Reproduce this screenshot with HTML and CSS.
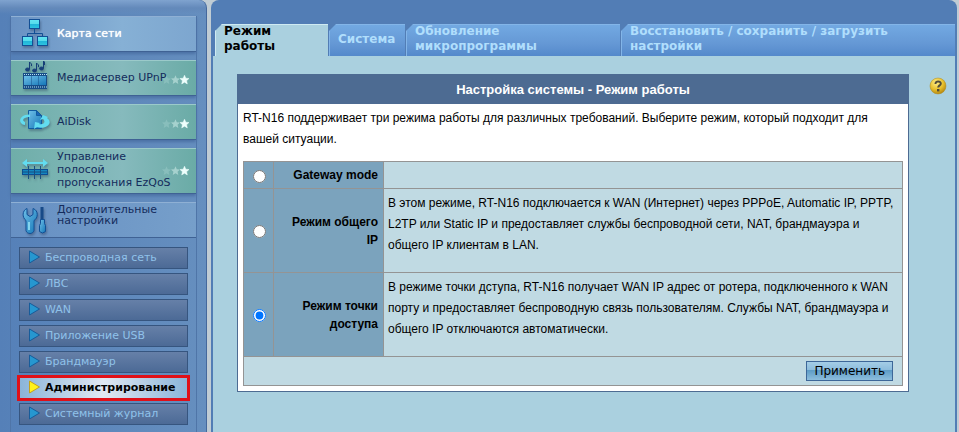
FILE: index.html
```html
<!DOCTYPE html>
<html lang="ru">
<head>
    <meta charset="UTF-8">
    <meta name="viewport" content="width=device-width, initial-scale=1.0">
    <title>RT-N16 - Режим работы</title>
    <link rel="stylesheet" href="styles.css">
</head>
<body>
    <!-- общие элементы для иконок -->
    <svg class="defs" width="0" height="0" aria-hidden="true">
        <defs>
            <linearGradient id="cyan" x1="0" y1="0" x2="0" y2="1">
                <stop offset="0" stop-color="#63e4f2"/>
                <stop offset="0.45" stop-color="#57dcec"/>
                <stop offset="0.5" stop-color="#1fb4d8"/>
                <stop offset="1" stop-color="#2fc4e0"/>
            </linearGradient>
            <linearGradient id="blue" x1="0" y1="0" x2="1" y2="1">
                <stop offset="0" stop-color="#6fc0e8"/>
                <stop offset="1" stop-color="#1577b8"/>
            </linearGradient>
            <radialGradient id="gold" cx="0.4" cy="0.3" r="0.7">
                <stop offset="0" stop-color="#ffee88"/>
                <stop offset="0.6" stop-color="#e8c02c"/>
                <stop offset="1" stop-color="#b88a10"/>
            </radialGradient>
            <path id="star" d="M4.500 0.200L5.800 3.200L9 3.500L6.600 5.700L7.300 8.900L4.500 7.200L1.700 8.900L2.400 5.700L0 3.500L3.200 3.200Z"/>
            <g id="stars">
                <use href="#star" x="0" fill="#d9f3f0" fill-opacity="0.2"/>
                <use href="#star" x="9" fill="#d9f3f0" fill-opacity="0.5"/>
                <use href="#star" x="18" fill="#effffd" stroke="#effffd" stroke-opacity="0.5"/>
            </g>
        </defs>
    </svg>

    <div class="page">
        <nav class="sidebar">
            <ul class="menu">
                <li>
                    <a class="menu-item home" href="#">
                        <svg class="icon" width="32" height="32" viewBox="0 0 32 32">
                            <path d="M16.500 12v5M9.500 20v-3.500h15v3.500" fill="none" stroke="#124f95"/>
                            <g fill="url(#cyan)" stroke="#124f95">
                                <rect x="11.500" y="2.500" width="10" height="9"/>
                                <rect x="4.500" y="19.500" width="10" height="9"/>
                                <rect x="19.500" y="19.500" width="10" height="9"/>
                            </g>
                        </svg>
                        <span>Карта сети</span>
                    </a>
                </li>
                <li>
                    <a class="menu-item green" href="#">
                        <svg class="icon" width="32" height="32" viewBox="0 0 32 32">
                            <g fill="#173f78" stroke="#173f78">
                                <path d="M11.500 1v7M11.500 1l2 2v2M18.500 2v7M18.500 2l2 2v2M25.500 0v7M25.500 0l1 1v3" fill="none" stroke-width="1"/>
                                <ellipse cx="9.500" cy="8.500" rx="2" ry="1.500"/>
                                <ellipse cx="16.500" cy="9.500" rx="2" ry="1.500"/>
                                <ellipse cx="23.500" cy="7.500" rx="2" ry="1.500"/>
                            </g>
                            <rect x="5" y="12" width="24" height="16" fill="#174d88"/>
                            <path d="M6 15h7v9H6zM13.500 15h7v9h-7zM21 15h7v9h-7z" fill="url(#blue)"/>
                            <path d="M6 13.500h23M6 26h23" stroke="#b6e0ee" stroke-width="1" stroke-dasharray="1 1"/>
                        </svg>
                        <span>Медиасервер UPnP</span>
                        <svg class="rating" width="28" height="10"><use href="#stars"/></svg>
                    </a>
                </li>
                <li>
                    <a class="menu-item green" href="#">
                        <svg class="icon" width="32" height="32" viewBox="0 0 32 32">
                            <path d="M10.500 5.500h8l5 5v13h-13z" fill="url(#blue)" stroke="#105ba0"/>
                            <path d="M18.500 5.500v5h5z" fill="#1667b8" stroke="#105ba0"/>
                            <path d="M12 9.500C5 9 0 14 3 18c1 1 2 2 4 2v-3C3 15 6 12 12 12zM25 10l5 2-1 1c7 5-1 12-10 9l-3 2 1-7 5 1-1 1c5 1 7-2 4-5l-3 1z" fill="#62dcf0"/>
                        </svg>
                        <span>AiDisk</span>
                        <svg class="rating" width="28" height="10"><use href="#stars"/></svg>
                    </a>
                </li>
                <li>
                    <a class="menu-item green tall" href="#">
                        <svg class="icon" width="32" height="32" viewBox="0 0 32 32">
                            <path d="M4 10l5-4v3h16V6l5 4-5 4v-3H9v3z" fill="#62dcf0"/>
                            <rect x="4.500" y="16.500" width="25" height="5" fill="#1487c0" stroke="#0c4d92"/>
                            <path d="M10.500 13v13M16.500 13v13M22.500 13v13M4 19h26" stroke="#174f82" fill="none"/>
                        </svg>
                        <span>Управление полосой пропускания EzQoS</span>
                        <svg class="rating" width="28" height="10"><use href="#stars"/></svg>
                    </a>
                </li>
                <li>
                    <a class="menu-item advanced" href="#">
                        <svg class="icon" width="32" height="32" viewBox="0 0 32 32">
                            <path d="M9 4.500v6l3 2 3-2v-6c6 2 5 10 1 12v10c-1 4-7 4-8 0v-10c-4-3-4-10 1-12z" fill="url(#blue)" stroke="#124f95"/>
                            <path d="M10 18h2v8h-2z" fill="#83d4ee"/>
                            <path d="M24 3v14" stroke="#174a88" stroke-width="3"/>
                            <path d="M22.500 15.500h4v4l1 2v6q-3 3-6 0v-6l1-2z" fill="url(#blue)" stroke="#124f95"/>
                        </svg>
                        <span>Дополнительные настройки</span>
                    </a>
                </li>
            </ul>
            <ul class="submenu">
                <li><a href="#"><svg class="arrow" width="13" height="14"><path d="M1.500 1L11.500 7L1.500 13Z"/></svg>Беспроводная сеть</a></li>
                <li><a href="#"><svg class="arrow" width="13" height="14"><path d="M1.500 1L11.500 7L1.500 13Z"/></svg>ЛВС</a></li>
                <li><a href="#"><svg class="arrow" width="13" height="14"><path d="M1.500 1L11.500 7L1.500 13Z"/></svg>WAN</a></li>
                <li><a href="#"><svg class="arrow" width="13" height="14"><path d="M1.500 1L11.500 7L1.500 13Z"/></svg>Приложение USB</a></li>
                <li><a href="#"><svg class="arrow" width="13" height="14"><path d="M1.500 1L11.500 7L1.500 13Z"/></svg>Брандмауэр</a></li>
                <li><a class="active" href="#"><svg class="arrow" width="13" height="14"><path d="M1.500 1L11.500 7L1.500 13Z"/></svg>Администрирование</a></li>
                <li><a href="#"><svg class="arrow" width="13" height="14"><path d="M1.500 1L11.500 7L1.500 13Z"/></svg>Системный журнал</a></li>
            </ul>
        </nav>

        <main class="main">
            <nav class="tabs">
                <a class="tab tab-mode current" href="#"><span>Режим работы</span></a>
                <a class="tab tab-system" href="#"><span>Система</span></a>
                <a class="tab tab-firmware" href="#"><span>Обновление микропрограммы</span></a>
                <a class="tab tab-settings" href="#"><span>Восстановить / сохранить / загрузить настройки</span></a>
            </nav>

            <div class="content">
                <form class="panel">
                    <h1>Настройка системы - Режим работы</h1>
                    <div class="panel-body">
                        <p>RT-N16 поддерживает три режима работы для различных требований. Выберите режим, который подходит для вашей ситуации.</p>
                        <table class="modes">
                            <tr>
                                <td class="pick"><input type="radio" name="mode" id="mode-gateway"></td>
                                <th><label for="mode-gateway">Gateway mode</label></th>
                                <td class="about"></td>
                            </tr>
                            <tr class="big">
                                <td class="pick"><input type="radio" name="mode" id="mode-router"></td>
                                <th><label for="mode-router">Режим общего IP</label></th>
                                <td class="about">В этом режиме, RT-N16 подключается к WAN (Интернет) через PPPoE, Automatic IP, PPTP, L2TP или Static IP и предоставляет службы беспроводной сети, NAT, брандмауэра и общего IP клиентам в LAN.</td>
                            </tr>
                            <tr class="big">
                                <td class="pick"><input type="radio" name="mode" id="mode-ap" checked></td>
                                <th><label for="mode-ap">Режим точки доступа</label></th>
                                <td class="about">В режиме точки дступа, RT-N16 получает WAN IP адрес от ротера, подключенного к WAN порту и предоставляет беспроводную связь пользователям. Службы NAT, брандмауэра и общего IP отключаются автоматически.</td>
                            </tr>
                            <tr>
                                <td class="actions" colspan="3"><button type="button">Применить</button></td>
                            </tr>
                        </table>
                    </div>
                </form>
                <a class="help" href="#" aria-label="Справка">
                    <svg width="18" height="18" viewBox="0 0 18 18">
                        <circle cx="9" cy="9" r="8" fill="url(#gold)" stroke="#ad8a24" stroke-width="0.500"/>
                        <path d="M6.500 7C6.300 3.500 12 3.700 11.800 6.700C11.700 8.300 9.200 8.500 9.200 10.500" fill="none" stroke="#514c38" stroke-width="2"/>
                        <rect x="8" y="12" width="2.400" height="2.400" fill="#514c38"/>
                    </svg>
                </a>
            </div>
        </main>
    </div>
</body>
</html>
```

FILE: styles.css
```css
* {
    box-sizing: border-box;
}

body {
    margin: 0;
    background: #c0ccd4;
    font-family: Arial, "Liberation Sans", sans-serif;
    font-size: 12px;
}

a {
    color: inherit;
    text-decoration: none;
}

ul {
    list-style: none;
    margin: 0;
    padding: 0;
}

.defs {
    position: absolute;
}

.page {
    display: flex;
    gap: 4px;
    min-height: 100vh;
}

/* Левое меню */
.sidebar {
    flex: none;
    display: flex;
    flex-direction: column;
    width: 207px;
    padding: 16px 9px 0 10px;
    background: linear-gradient(#7fa3cf, #6389ba 8px, transparent 14px), linear-gradient(90deg, #5580b8, #668fbf);
    border-right: 1px solid #45689c;
    border-radius: 0 8px 0 0;
    font-family: Verdana, "DejaVu Sans", sans-serif;
    font-size: 11px;
}

.menu {
    display: flex;
    flex-direction: column;
    gap: 8px;
    border: solid #4f75a8;
    border-width: 0 1px;
}

.menu-item {
    position: relative;
    display: flex;
    align-items: center;
    gap: 7px;
    min-height: 36px;
    padding: 0 24px 2px 7px;
    border-top: 1px solid #8fb0d4;
    border-bottom: 1px solid #3f6294;
    box-shadow: 0 2px 3px #4b70a4;
    color: #142c5c;
    line-height: 13px;
}

.menu-item .icon {
    flex: none;
    filter: drop-shadow(1px 2px 1px rgba(40, 60, 90, 0.4));
}

.home {
    background: linear-gradient(90deg, #6991c3, #86b0d5 60%, #7da6cf);
    color: white;
    text-shadow: 0 0 1px white;
}

.green {
    background: linear-gradient(90deg, #6faea9, #86babd 60%, #6aaba6);
    border-top-color: #9bcaca;
}

.green:not(.tall) {
    white-space: nowrap;
}

.tall {
    min-height: 46px;
    padding-bottom: 4px;
}

.advanced {
    background: linear-gradient(90deg, #6790c3, #769fca);
    box-shadow: none;
    line-height: 11px;
    padding-bottom: 10px;
}

.advanced .icon {
    margin-bottom: -10px;
}

.rating {
    position: absolute;
    right: 6px;
    top: 14px;
    overflow: visible;
}

.tall .rating {
    top: 17px;
}

.submenu {
    flex: 1;
    display: flex;
    flex-direction: column;
    gap: 4px;
    padding: 9px 8px 7px;
    border: solid #4f75a8;
    border-width: 0 1px;
}

.submenu a {
    display: flex;
    align-items: center;
    gap: 4px;
    height: 22px;
    padding: 0 0 2px 8px;
    background: linear-gradient(#6680a8, #4c6a96);
    border: 1px solid #36557f;
    color: #90c2ea;
}

.arrow {
    fill: #2697d0;
    stroke: #175c9a;
}

.submenu .active {
    background: linear-gradient(90deg, #8bb5d9, #e1e8f2 50%, #8bb5d9);
    border-color: #b9cbe0;
    outline: 3px solid #e01018;
    outline-offset: -1px;
    color: #000;
    font-weight: bold;
}

.active .arrow {
    fill: #fff21a;
    stroke: #c5a21c;
}

/* Основная часть */
.main {
    flex: 1;
    min-width: 0;
    display: flex;
    flex-direction: column;
    margin-right: 2px;
    padding: 24px 2px 0;
    background: #527db5;
    border-radius: 8px 8px 0 0;
}

.tabs {
    display: flex;
    gap: 1px;
    padding-left: 2px;
    font-family: Verdana, "DejaVu Sans", sans-serif;
    font-size: 12px;
    font-weight: bold;
    line-height: 15px;
}

.tab {
    display: flex;
    align-items: center;
    height: 32px;
    padding: 0 8px 3px;
    background: linear-gradient(#72a9e2, #6598d5 60%, #5489cb);
    border: solid #83b5e8;
    border-width: 1px 0 0 1px;
    clip-path: polygon(7px 0, 100% 0, 100% 100%, 0 100%, 0 7px);
    color: #b0defc;
}

.tab-mode {
    width: 113px;
    padding-right: 30px;
}

.tab-system {
    width: 76px;
}

.tab-firmware {
    width: 214px;
    padding-right: 60px;
}

.tab-settings {
    flex: 1;
}

.current {
    background: #aad0df;
    border-color: #cfeaf2;
    color: #000;
}

.content {
    flex: 1;
    display: flex;
    align-items: flex-start;
    gap: 20px;
    padding: 18px 8px 18px 24px;
    background: #aad0df;
}

.panel {
    flex: 1;
    background: white;
    border: 1px solid #4d6b92;
}

.panel h1 {
    margin: 0;
    background: #4d6b92;
    color: white;
    font-size: 13px;
    line-height: 29px;
    text-align: center;
}

.panel-body {
    padding: 4px 5px 5px;
}

.panel p {
    margin: 0 0 11px;
    padding-right: 20px;
    line-height: 21px;
}

.modes {
    width: 100%;
    border-collapse: collapse;
    background: #c0dae3;
}

.modes td,
.modes th {
    border: 1px solid #949494;
}

.modes tr {
    height: 27px;
}

.modes .big {
    height: 84px;
}

.pick {
    width: 30px;
    padding: 2px 0 0 2px;
    background: #7ba3bd;
    text-align: center;
}

.pick input {
    display: block;
    width: 13px;
    height: 13px;
    margin: 0 auto;
}

.modes th {
    width: 110px;
    padding: 0 5px 0 15px;
    background: #7ba3bd;
    line-height: 18px;
    text-align: right;
}

.about {
    padding: 4px;
    line-height: 21px;
    vertical-align: top;
}

.actions {
    padding: 4px 9px;
    text-align: right;
}

.actions button {
    height: 20px;
    padding: 0 7px;
    background: linear-gradient(#a4cde6, #8cbcdc 45%, #5d9cc6 46%, #8dbedd);
    border: 1px solid #3d6798;
    color: #000;
    font-family: Verdana, "DejaVu Sans", sans-serif;
    font-size: 12px;
}

.actions button,
.help svg {
    display: block;
    margin-left: auto;
}

.help {
    padding-top: 3px;
}
```
